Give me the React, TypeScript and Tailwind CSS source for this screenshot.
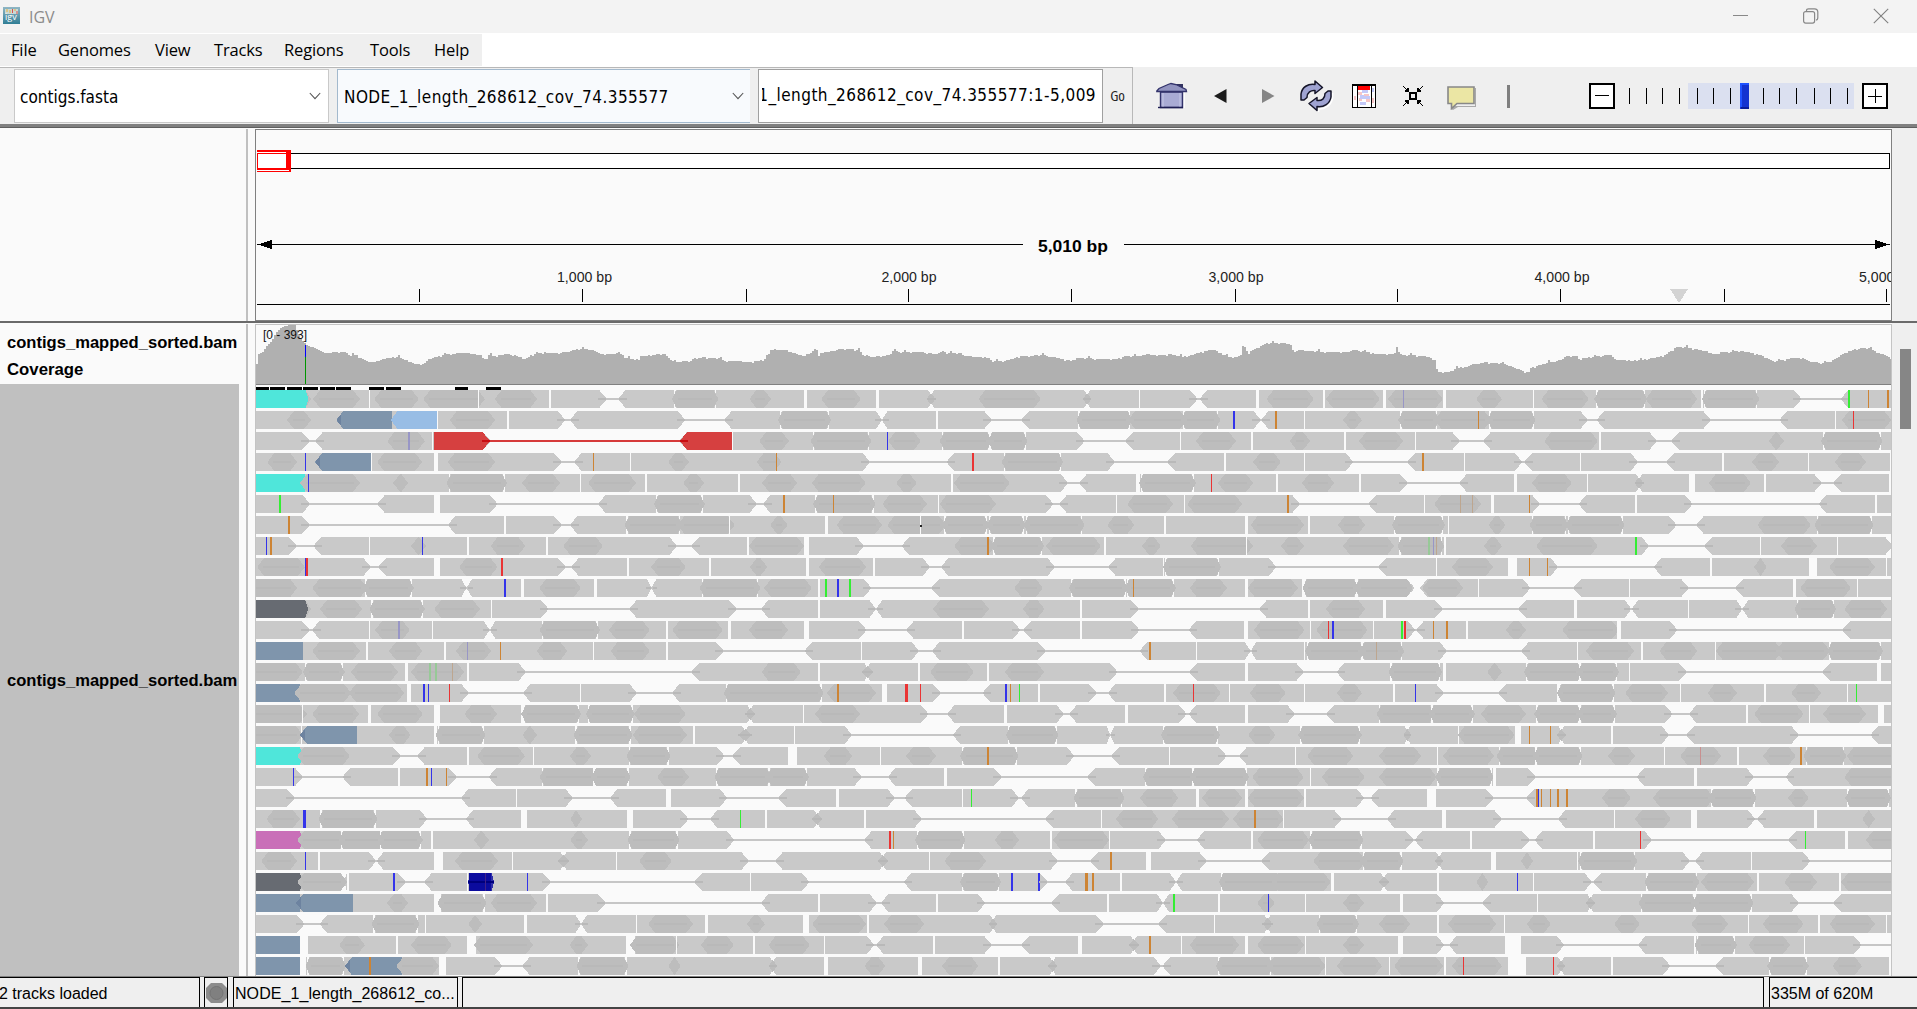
import React from "react";

const UI = "font-['Open_Sans','Noto_Sans',sans-serif]";
const FIELD = "font-['DejaVu_Sans_Condensed','DejaVu_Sans',sans-serif] [font-stretch:semi-condensed]";
const ARIAL = "font-['Liberation_Sans',Arial,sans-serif]";

/* ---------- Alignment data ----------
   Each row is split in three tiles. Tokens:
   g gap, n paired reads joined by a line, w open space between reads, x crossing reads,
   o overlap, b overlap flush with the read ends, M mismatch tick, R coloured read,
   L/A coloured reads pointing left/right. */
const ROWS: [string, string, string][] = [
  ["o735,762 Acyan,627,756 o767,882 g903 o917,1026 o1037,1188 g1171 o1212,1316 g1345,1349 n1468,1533",
   "b78,192 o268,321 g402,408 o444,541 g578,585 x702,724 o829,982 x1085,1106 g1223 n1347,1390 g1510,1516 o1535,1651",
   "g113,117 o120,252 g260,266 o272,406 Mlav,309,311 g407,413 o488,551 g626 o648,764 b777,907 o903,1030 g1039,1043 b1041,1182 n1266,1400 Mgreen,1399,1404 Morange,1448,1450 Morange,1494,1499"],
  ["o703,762 Lslate,824,960 Lsky,957,1071 g1071 o1102,1213 g1242,1246 n1366,1415",
   "n92,225 b338,468 n578,607 g726,729 n843,953 b1069,1206 o1196,1340 b1325,1422 Mblue,1453,1458 n1503,1540 Morange,1556,1561",
   "g67 o162,208 b297,398 o386,525 b515,634 Morange,492,495 n743,802 n1044,1250 g1368 o1384,1505 Mred,1411,1414"],
  ["n740,791 o949,1041 Mlav,1000,1004 g1059,1062 n1183,1683 Ared,1063,1200 Zred,1180,1686 Lred,1666,1793",
   "g225,229 o292,365 b418,567 Mblue,605,608 o608,688 b734,862 b852,950 n1070,1208 g1322,1325 o1362,1460 g1498,1501",
   "o31,81 g164,168 o201,309 g339 n429,524 o655,786 g790,793 n912,985 o1205,1242 b1333,1484"],
  ["o655,728 Mblue,747,750 Lslate,772,909 g909 o924,1034 g1063,1072 o1097,1213 n1357,1425 Morange,1453,1455 g1543,1547",
   "o69,120 o286,347 Morange,333,336 n545,770 Mred,813,818 b886,1037 n1145,1311 g1432,1435 o1502,1570",
   "g67 n168,338 Morange,355,360 g457 n582,625 g743 n866,973 g1090,1094 o1164,1230 g1302 o1367,1443 g1503"],
  ["Rcyan,627,748 o735,882 Mblue,755,757 o963,1000 b1094,1242 o1279,1372 g1420 o1441,1558",
   "g12,16 o106,157 g240,246 o299,385 o421,553 o628,678 g763,766 o769,906 n1030,1095 g1216,1224 b1222,1362 Mred,1399,1401 o1416,1502 g1557,1562",
   "o61,140 g202,205 n301,465 g581,589 o625,722 g760,763 x876,898 g1009,1023 o1058,1161 g1194,1197 n1316,1382 g1499,1504"],
  ["Mgreen,684,688 n741,943 g1063,1077 n1200,1484",
   "b34,159 n268,320 Morange,350,355 b424,577 Morange,473,475 o594,703 g731 o734,872 n994,1046 g1165 o1194,1306 g1333 o1341,1475",
   "Morange,24,29 n37,243 g361 o385,500 Mtan,449,451 Mtan,478,480 g524,531 Morange,617,620 n625,758 g876,881 n999,1346 g1466,1469"],
  ["Morange,706,710 n740,1116 g1236,1239 n1357,1415 b1530,1672",
   "o92,232 g219 o319,362 g453,460 o482,593 o606,750 g686 b740,855 b850,945 b940,1089 o1145,1211 g1285,1288 g1482,1489 o1496,1627",
   "g76,82 o149,216 b281,412 g420 o518,560 b619,714 b708,852 n960,1046 o1177,1308 b1317,1462"],
  ["Mblue,652,654 Morange,661,666 n708,787 g903 o1007,1044 Mblue,1034,1036 g1145,1150 o1202,1287 g1338,1342 o1380,1477",
   "n72,145 g263,266 o267,402 g402,413 n530,660 o770,870 Morange,850,855 b860,990 o995,1129 g1138,1141 o1230,1276 o1349,1502 g1485",
   "o10,66 o162,287 b295,410 Mpale,370,375 Mlav,382,385 Mtan,390,392 g408,413 o507,551 o635,786 Mgreen,877,882 n893,1066 g1184 o1235,1323 g1371,1373 w1490,1530"],
  ["o630,747 Mblue,747,750 Mred,750,755 n890,946 g1063,1079 o1125,1219 Mred,1227,1232 n1367,1418 g1537,1540",
   "o27,112 g168,173 o269,312 g407,415 o438,554 g571,575 n692,756 n998,1166 g1281 b1281,1424 n1540,1828",
   "g390 o429,529 g567,589 Morange,617,620 Morange,661,664 n670,942 g1062,1066 o1169,1200 g1303,1324 o1353,1465 g1493"],
  ["o610,728 o765,900 b890,1014 n1130,1156 Mblue,1235,1240 g1276,1283 o1321,1423 g1455,1462",
   "n17,40 b146,295 o304,421 g436,442 Mgreen,453,458 Mblue,483,488 Mgreen,512,517 n548,733 o917,987 b1051,1195 b1188,1313 Morange,1208,1210 o1347,1438 g1483,1490 o1489,1612",
   "g61,65 b62,200 b190,332 w318,369 o356,456 g493 n602,745 g863,866 n990,1142 g1264,1271 o1282,1406 g1420"],
  ["o735,762 Acoal,627,755 o784,887 b905,1041 o1064,1176 g1203 n1325,1560",
   "n218,315 g436,442 n562,594 o718,855 o938,991 g1077,1082 n1203,1536",
   "g76,82 o120,216 g260,266 n387,610 g728,734 n852,885 g1008 n1125,1155 b1268,1370 o1390,1495"],
  ["n740,783 g903 o919,1004 Mlav,975,981 g1059,1062 n1185,1214 b1322,1470 o1492,1592",
   "g64,68 o79,203 g216,222 o267,363 g402,415 n536,671 g789,795 n913,958 g1078,1084 n1205,1363 g1480,1489 o1504,1628",
   "g82 o96,222 Mred,125,127 Mblue,135,140 g236 Mgreen,304,309 Mred,311,316 n320,360 Morange,382,385 Morange,414,419 g463,469 o561,610 o699,838 g834,844 n962,1404"],
  ["Rslate,627,742 o765,882 g897,901 o953,1035 g1088,1092 o1117,1203 Mlav,1144,1147 Morange,1225,1227 o1315,1390 g1453 o1496,1592",
   "g64,68 n186,422 g541,545 n665,734 n975,1243 Morange,1247,1252 g1363 n1482,1510",
   "g67 b68,214 b203,312 Mtan,243,245 n398,617 g736 o757,875 g892,896 o937,1030 g1074 o1075,1238 o1222,1355 b1348,1485"],
  ["o610,742 b742,845 o860,975 g992,999 o1007,1137 Mpale,1051,1056 Mpale,1066,1071 Mtan,1107,1109 g1145,1150 n1270,1713",
   "o298,394 g436,442 x543,571 g682,685 o711,818 g851,854 o894,990 n1151,1365 g1482,1489",
   "n47,165 b273,405 g407,413 o515,551 b605,748 b736,838 g863,866 n985,1355 g1470,1479"],
  ["Rslate,627,735 o721,860 o855,990 g997,1006 Mblue,1036,1041 Mblue,1049,1051 Mred,1100,1102 n1130,1300 g1420 n1542,1665",
   "b205,450 o458,578 Morange,483,488 g593,604 Mred,649,657 Mred,686,688 n718,858 Mblue,894,899 Morange,906,909 Mgreen,929,931 g976,979 n1100,1165 g1285,1289 o1306,1423 Mred,1355,1357 g1444 o1494,1582",
   "g67 o147,208 g283,288 Mblue,338,341 n390,561 g685,690 b686,830 o853,958 g988,991 o1055,1127 g1194,1197 o1260,1333 g1397 Mgreen,1419,1421"],
  ["o610,752 g740 o765,880 g902,908 o924,1036 g1063,1079 o1138,1218 g1276,1284 b1277,1424 b1435,1555",
   "o-15,112 x258,282 g400 o429,539 n688,771 g893,898 n1020,1070 g1188,1195 n1320,1363 g1482,1489",
   "n25,140 b244,386 b373,485 o500,610 b630,747 b736,833 n950,1028 g1149,1153 o1169,1290 g1304,1307 o1338,1443 g1472,1486"],
  ["o610,742 g738 Lslate,735,875 o953,1006 g1063,1070 b1067,1190 o1280,1316 b1405,1550 o1550,1683",
   "g130,134 x241,274 g378 n501,785 b896,1026 n1143,1162 b1276,1421 o1490,1557",
   "b52,208 x310,329 g443,447 o443,582 g582,597 Morange,617,620 Morange,669,671 x685,708 g819,822 n942,1022 n1260,1473"],
  ["Acyan,627,742 o728,857 n963,1041 g1145,1150 o1169,1286 g1306 o1396,1448 b1535,1643",
   "n188,245 g363,384 o450,520 g587,590 o652,725 b784,928 Morange,850,855 n1045,1174 g1297 n1418,1487",
   "g45 o74,187 o250,353 g391 o407,532 b538,642 b628,749 o811,877 g949 o988,1088 Mrose,1036,1039 g1128,1133 o1191,1271 Morange,1281,1286 b1290,1395 o1396,1540"],
  ["Mblue,718,720 n723,858 g976,981 Morange,1044,1049 Mblue,1056,1058 Morange,1093,1095 n1100,1216 b1322,1464 b1448,1545",
   "o42,120 b182,322 b310,414 n525,626 g745,751 n867,1115 b1232,1362 b1348,1492 o1500,1626",
   "g82 o110,215 o250,391 b388,531 g530,536 n615,900 g1022,1030 n1150,1265 o1390,1540"],
  ["n703,1148 g1263 n1385,1513",
   "g64,75 n195,358 g480,487 n606,667 g790 Mgreen,811,813 n910,952 b1062,1187 o1225,1319 g1362,1369 o1377,1475 g1482,1489 o1489,1627",
   "g67,72 n195,248 g367,389 n512,630 Morange,635,639 Mblue,639,642 Morange,647,649 Morange,669,671 Morange,686,691 Morange,708,713 o796,867 o921,1070 b1058,1175 o1252,1303 b1392,1505"],
  ["o653,735 Mblue,742,750 b780,925 n1028,1160 g1276,1291 o1397,1426 g1537,1550",
   "n100,190 Mgreen,245,247 g306,311 x422,446 g550,553 n672,1012 g1130,1133 o1166,1270 o1303,1443 o1453,1577 Morange,1504,1509",
   "g15 n140,288 g404,413 n532,707 g825 o877,965 g1014,1030 n1153,1195 g1316,1324 o1434,1465"],
  ["Apink,627,742 o728,850 b830,948 b926,1036 g1056,1062 o1161,1198 o1397,1441 b1537,1665",
   "n212,568 Mred,611,615 Morange,620,622 b673,798 o869,929 g1005,1009 o1012,1150 g1150 n1270,1383 g1498,1503 o1512,1640",
   "b77,212 n316,356 g474,477 n600,650 g773,778 Mred,889,892 n900,1272 Mgreen,1293,1296 g1392,1398 o1443,1540"],
  ["o640,728 Mblue,747,750 g779,784 n904,940 g1063,1085 o1115,1220 g1255 x1367,1394 g1508,1512",
   "o-2,78 n248,350 x583,607 g709 o746,848 n1005,1122 Morange,1151,1156 g1240,1251 n1370,1541",
   "o89,218 b205,310 x387,407 g525,536 o598,627 g735 b737,883 n993,1043 g1162 n1288,1560"],
  ["Acoal,627,742 w836,850 o728,851 g849,856 Mblue,963,968 n975,1058 g1144 Xnavy,1147,1210 Mblue,1291,1294 n1330,1720",
   "g270,273 n396,665 b784,885 Mblue,909,914 Mblue,975,980 n980,1060 Morange,1090,1098 Morange,1107,1112 g1175,1180 n1298,1328 b1418,1572",
   "o-14,132 g132,139 x250,274 g391,398 o488,518 Mblue,588,590 g626 n753,794 b900,1035 o1039,1169 g1177,1182 o1243,1323 g1378,1382 o1382,1540"],
  ["Rslate,627,735 Lslate,725,865 o948,1000 g1063,1080 b1072,1192 o1202,1316 g1338,1342 n1465,1883",
   "g436,442 n562,609 g726,729 n827,1027 g1145,1148 n1267,1296 Mgreen,1306,1311 g1415,1420 o1512,1555 Mblue,1539,1541",
   "g69,72 o162,213 g302,308 n391,522 g636 x756,779 b886,1028 b1018,1168 n1260,1382"],
  ["n727,802 b910,1028 g1042 o1147,1181 g1285,1290 n1410,1438 g1557",
   "o20,130 g159,166 o262,306 g400,415 o422,554 g557,560 o598,696 x855,875 n1117,1289 g1407 x1525,1550",
   "b97,201 o250,326 g391,398 o419,537 g555,558 o612,671 o826,889 o1015,1105 g1155 o1190,1290 g1326,1330 o1354,1465 g1493"],
  ["Rslate,627,735 g735,755 o831,894 g970,974 o1007,1107 g1145,1165 o1161,1306 o1395,1441 g1534,1555 o1543,1665",
   "g89 o149,230 g278,282 o315,416 g452 n555,597 g719,722 n843,953 g1072,1084 x1197,1223 Morange,1247,1252 g1326 o1347,1468 g1482,1489 o1512,1627",
   "g69,72 o162,213 g297,308 n391,440 g559,597 n685,903 g1022,1027 b1023,1127 o1155,1257 g1290,1293 n1413,1560"],
  ["Rslate,627,735 g735,750 b748,848 Lslate,845,984 Morange,904,909 o971,1076 g1075,1092 n1212,1298 b1412,1540",
   "o69,100 x315,336 g451,460 o550,601 g682,692 o740,829 g878,883 x1000,1022 n1258,1299 b1411,1552 o1536,1680",
   "g118 o147,257 g275,278 o287,407 g408,413 o429,551 Mred,456,458 g567,611 Mred,676,679 x686,706 g819,822 n945,1093 b1201,1303 o1361,1433 g1499,1504"],
];

const OFFSETS = [0, 640, 1277];
const K = 2.45;

const COLORS: Record<string, string> = {
  cyan: "#4fe6da", slate: "#7f95ac", sky: "#98bde5", red: "#d64040", coal: "#676b72", pink: "#c96fb8", navy: "#0a0a9e",
};
const TICKS: Record<string, string> = {
  blue: "#3434ea", red: "#ea3434", green: "#34ee34", orange: "#cd8434", lav: "#9896c6", pale: "#97c997", tan: "#bda68f", rose: "#c88f8f",
};
const BG = "#fafafa";
const BODY = "#c9c9c9";
const DARK = "#bdbdbd";

function hex(a: number, b: number, y: number, t: number) {
  const s = Math.min(t, (b - a) / 2);
  return `${a},${y + 9} ${a + s},${y} ${b - s},${y} ${b},${y + 9} ${b - s},${y + 18} ${a + s},${y + 18}`;
}

function Token({ raw, off, y }: { raw: string; off: number; y: number }) {
  const kind = raw[0];
  let rest = raw.slice(1);
  let color = "";
  if ("MRLAXZ".includes(kind)) {
    const i = rest.indexOf(",");
    color = rest.slice(0, i);
    rest = rest.slice(i + 1);
  }
  const p = rest.split(",").map(Number);
  const X = (v: number) => off + v / K;
  const a = X(p[0]);
  const b = p.length > 1 ? X(p[1]) : a + 1;
  const crisp = { shapeRendering: "crispEdges" as const };
  switch (kind) {
    case "g":
      return <rect x={Math.round(a)} y={y} width={Math.max(1, Math.round(b) - Math.round(a))} height={18} fill={BG} {...crisp} />;
    case "n":
    case "w": {
      const m = (a + b) / 2;
      const l = Math.min(a + 8, m);
      const r = Math.max(b - 8, m);
      return (
        <g {...crisp}>
          <polygon fill={BG} points={`${a},${y} ${b},${y} ${r},${y + 9} ${b},${y + 18} ${a},${y + 18} ${l},${y + 9}`} />
          {kind === "n" && (
            <>
              <rect x={a - 1} y={y + 8} width={b - a + 2} height={2} fill="#c6c6c6" />
              <rect x={a - 1} y={y + 8} width={l - a} height={2} fill="#b9b9b9" />
              <rect x={r + 1} y={y + 8} width={b - r} height={2} fill="#b9b9b9" />
            </>
          )}
        </g>
      );
    }
    case "x": {
      const m = (a + b) / 2;
      return (
        <g {...crisp}>
          <polygon fill={BG} points={`${m - 3},${y} ${m + 3},${y} ${m},${y + 5}`} />
          <polygon fill={BG} points={`${m - 3},${y + 18} ${m + 3},${y + 18} ${m},${y + 13}`} />
          <polygon fill={DARK} points={`${a},${y + 9} ${m},${y + 3} ${b},${y + 9} ${m},${y + 15}`} />
          <rect x={a} y={y + 8} width={b - a} height={2} fill="#b7b7b7" />
        </g>
      );
    }
    case "o":
    case "b": {
      return (
        <g {...crisp}>
          {kind === "b" && (
            <>
              <polygon fill={BG} points={`${a + 2},${y} ${a + 4},${y} ${a + 2},${y + 6}`} />
              <polygon fill={BG} points={`${a + 2},${y + 18} ${a + 4},${y + 18} ${a + 2},${y + 12}`} />
              <polygon fill={BG} points={`${b - 4},${y} ${b - 2},${y} ${b - 2},${y + 6}`} />
              <polygon fill={BG} points={`${b - 4},${y + 18} ${b - 2},${y + 18} ${b - 2},${y + 12}`} />
            </>
          )}
          <polygon fill={DARK} points={hex(a, b, y, kind === "b" ? 5 : 7)} />
          {b - a > 16 && <rect x={a + 6} y={y + 8} width={b - a - 12} height={2} fill="#b9b9b9" />}
        </g>
      );
    }
    case "M":
      return <rect x={Math.round(a)} y={y} width={Math.max(1, Math.round((p[1] - p[0]) / K))} height={18} fill={TICKS[color]} {...crisp} />;
    case "R":
      return <rect x={a} y={y} width={b - a} height={18} fill={COLORS[color]} {...crisp} />;
    case "L":
      return (
        <g {...crisp}>
          <polygon fill={COLORS[color]} points={`${a},${y + 9} ${a + 7},${y} ${b},${y} ${b},${y + 18} ${a + 7},${y + 18}`} />
          {color === "slate" && <polygon fill="#6d83a0" points={`${a},${y + 9} ${a + 5},${y + 3} ${a + 5},${y + 15}`} />}
          {color === "red" && <rect x={a} y={y + 8} width={8} height={2} fill="#c90d12" />}
        </g>
      );
    case "A":
      return (
        <polygon fill={COLORS[color]} points={`${a},${y} ${b - (color === "red" ? 7 : 3)},${y} ${b},${y + 9} ${b - (color === "red" ? 7 : 3)},${y + 18} ${a},${y + 18}`} {...crisp} />
      );
    case "Z":
      return (
        <g {...crisp}>
          <rect x={a} y={y + 8} width={b - a} height={2} fill="#d63a3a" />
          <rect x={a} y={y + 8} width={8} height={2} fill="#c90d12" />
        </g>
      );
    case "X":
      return (
        <g {...crisp}>
          <polygon fill="#3030a8" points={hex(a, b, y, 2)} />
          <rect x={a + 1} y={y} width={b - a - 4} height={18} fill="#0b0b9e" />
          <rect x={a} y={y + 8} width={b - a} height={2} fill="#00007c" />
          <rect x={a + 17} y={y} width={1} height={18} fill="#40208a" />
        </g>
      );
  }
  return null;
}

const COVERAGE: string[] = [
  "627,132 632,102 642,95 651,80 661,68 668,52 676,36 685,24 694,20 704,15 724,15 725,30 735,55 748,75 770,85 785,92 795,100 815,97 845,97 858,107 870,105 885,115 903,127 925,122 945,113 975,112 990,118 1000,125 1015,133 1035,133 1050,115 1060,113 1085,105 1100,102 1137,98 1140,93 1148,102 1175,104 1180,115 1189,116 1195,105 1210,108 1240,102 1262,106 1285,118 1300,105 1330,97 1360,100 1390,95 1410,88 1440,87 1455,93 1470,102 1490,103 1515,97 1530,113 1545,117 1566,119",
  "0,108 20,106 45,102 62,103 65,110 83,127 108,122 120,127 128,115 155,112 195,115 205,122 240,122 265,127 290,122 305,118 313,102 320,88 357,90 370,97 385,102 400,110 407,101 424,97 427,85 431,87 433,107 440,100 465,94 485,87 510,87 538,90 540,103 550,105 565,111 600,107 610,103 622,88 635,97 680,95 720,102 740,94 750,100 785,100 790,107 820,110 850,113 862,122 895,122 910,117 930,108 955,107 985,105 1010,111 1035,118 1055,122 1068,113 1100,115 1130,118 1160,118 1175,113 1190,107 1210,109 1240,103 1265,105 1300,103 1330,110 1350,105 1365,99 1380,95 1402,88 1415,97 1430,105 1445,112 1464,112 1466,105 1474,103 1475,76 1481,82 1487,100 1495,94 1505,88 1520,78 1530,70 1550,68",
  "15,68 25,72 36,76 37,95 60,88 70,93 115,95 150,97 175,97 176,88 215,95 245,103 270,103 289,100 290,78 295,78 297,103 320,105 360,108 375,113 388,122 390,155 422,155 430,150 448,140 465,140 480,132 508,127 550,130 570,138 590,148 605,155 616,155 618,145 635,137 660,128 690,121 710,108 735,108 736,118 760,112 790,108 815,103 825,118 870,122 895,119 930,112 950,105 963,92 980,80 1000,82 1025,88 1055,95 1072,104 1090,95 1140,94 1160,98 1180,104 1200,115 1215,124 1240,120 1255,115 1285,113 1300,122 1330,130 1345,127 1370,115 1378,106 1400,93 1420,86 1450,84 1465,95 1485,104 1495,110 1505,120",
];

function coveragePath() {
  const pts: [number, number][] = [];
  COVERAGE.forEach((s, i) =>
    s.split(" ").forEach((q) => {
      const [x, y] = q.split(",").map(Number);
      pts.push([OFFSETS[i] + x / K, 320 + y / 3]);
    })
  );
  let d = "M256,384";
  let j = 0;
  for (let x = 256; x < 1891; x += 2) {
    while (j < pts.length - 2 && pts[j + 1][0] <= x) j++;
    const [x0, y0] = pts[j];
    const [x1, y1] = pts[j + 1];
    const t = Math.max(0, Math.min(1, (x - x0) / (x1 - x0)));
    const h = (x * 7919) % 23;
    const jitter = x > 330 ? (h === 3 ? -2 : h > 18 ? 1 : 0) : 0;
    const y = Math.round(y0 + (y1 - y0) * t) + jitter;
    d += `V${y}H${Math.min(1891, x + 2)}`;
  }
  return d + "V384Z";
}

const BLACK = [[627, 658], [661, 698], [703, 740], [742, 778], [784, 821], [823, 860], [904, 941], [946, 982], [1115, 1147], [1191, 1227]];

function AlignmentTrack() {
  return (
    <svg className="block" width="1635" height="651" viewBox="256 325 1635 651">
      <path d={coveragePath()} fill="#b0b0b0" shapeRendering="crispEdges" />
      <g shapeRendering="crispEdges">
        <rect x="305" y="345" width="1" height="12" fill="#0000ff" />
        <rect x="305" y="357" width="1" height="27" fill="#009600" />
        <rect x="256" y="384" width="1635" height="1" fill="#808080" />
        {BLACK.map(([a, b]) => (
          <rect key={a} x={Math.round(a / K)} y="387" width={Math.round((b - a) / K)} height="3" fill="#000" />
        ))}
      </g>
      <text x="263" y="339" textLength="44" lengthAdjust="spacingAndGlyphs" className={`${ARIAL} text-[12.5px]`} fill="#111">[0 - 393]</text>
      {ROWS.map((tiles, r) => {
        const y = 390 + r * 21;
        return (
          <g key={r}>
            <rect x="256" y={y} width="1635" height="18" fill={BODY} />
            {tiles.map((t, i) => t.split(" ").map((raw, k) => <Token key={`${i}-${k}`} raw={raw} off={OFFSETS[i]} y={y} />))}
          </g>
        );
      })}
      <rect x="920" y="525" width="2" height="2" fill="#222" />
    </svg>
  );
}

const MAJOR: [number, string][] = [[584, "1,000 bp"], [908.5, "2,000 bp"], [1235.5, "3,000 bp"], [1561.5, "4,000 bp"], [1886, "5,000 bp"]];
const TICK_X = [419, 582, 746, 908, 1071, 1235, 1397, 1560, 1724, 1886];

function Ruler() {
  return (
    <svg className="block" width="1635" height="190" viewBox="256 130 1635 190">
      <g shapeRendering="crispEdges">
        <rect x="257" y="153" width="1633" height="16" fill="#000" />
        <rect x="258" y="154" width="1631" height="14" fill="#fff" />
        <rect x="257" y="150" width="34" height="22" fill="#fff" />
        <path d="M257 150h34v22h-34v-1h32v-1h-32v-2h29v-14h-29v-1h30v-1h-30z M257 154h1v14h-1z" fill="#f00" />
        <rect x="286" y="152" width="4" height="18" fill="#f00" />
        <rect x="257" y="244" width="766" height="1" />
        <rect x="1124" y="244" width="766" height="1" />
        <path d="M258 244.5L272 240V249Z M1889 244.5L1875 240V249Z" />
        {TICK_X.map((x) => <rect key={x} x={x} y="289" width="1" height="13" />)}
        <rect x="257" y="304" width="1633" height="1" />
        <path d="M1670 289H1688L1679 303Z" fill="#d3d3d3" />
      </g>
      <text x="1038" y="251.5" textLength="70" lengthAdjust="spacingAndGlyphs" className={`${ARIAL} text-[17px] font-bold`}>5,010 bp</text>
      {MAJOR.map(([x, s]) => (
        <text key={s} x={x - 27} y="282" textLength="55" lengthAdjust="spacingAndGlyphs" className={`${ARIAL} text-[15px]`} fill="#222">{s}</text>
      ))}
    </svg>
  );
}

function Chevron() {
  return (
    <svg width="12" height="8" viewBox="0 0 12 8" fill="none" stroke="#555" strokeWidth="1.1"><path d="M0.8 1L6 6.6L11.2 1" /></svg>
  );
}

function AppIcon() {
  return (
    <div className="relative ml-[3px] h-[17px] w-[17px] overflow-hidden bg-gradient-to-b from-[#8fb6c4] to-[#2f7f96]">
      <svg className="absolute inset-0" width="17" height="17" viewBox="0 0 17 17">
        <path d="M2 2h13v5H2z" fill="#c9d9d6" />
        <path d="M4 2v3M7 3v3M12 2v2" stroke="#e8b23a" />
        <path d="M9.500 2v4M14 4v3" stroke="#d9534f" />
      </svg>
      <span className={`${UI} absolute left-[2px] top-[4px] text-[9px] leading-[12px] text-white`}>igv</span>
    </div>
  );
}

function HouseIcon() {
  return (
    <svg className="ml-[23px]" width="32" height="28" viewBox="0 0 32 28">
      <path d="M5 10H29V26H5Z" fill="#fff" opacity=".8" />
      <path d="M4.500 10V25.500H26.500V10Z" fill="#a9abd4" stroke="#33336b" strokeWidth="1.4" />
      <path d="M7 11V25M24 11V25" stroke="#c6c8e6" />
      <path d="M20 2h7v6h-7z" fill="#33335f" />
      <path d="M0.800 9L3 6.500L12 2.500L15 1.500L20 2.500L30 7.500L30.500 9.500H0.800Z" fill="#9294c0" stroke="#33336b" strokeWidth="1.3" />
      <path d="M2 25.500H27" stroke="#1f1f55" strokeWidth="1.4" />
    </svg>
  );
}

function RefreshIcon() {
  return (
    <svg width="34" height="32" viewBox="0 0 34 32" strokeLinejoin="round">
      <path d="M32.500 13V18C31 26 24 29.500 18.500 29V32" fill="none" stroke="#fff" strokeWidth="1.6" />
      <path d="M1 20V14C2 7 8 3.500 15 4.500V1L22.500 7.500L15 13.500V10.500C11 10 7 12.500 7 17.500L4 20Z" fill="#9fa3d2" stroke="#141428" strokeWidth="1.5" />
      <path d="M31 11V17C30 23.500 24 27.500 17 26.500V30.500L9 23.500L17 17.500V20.500C22 21 25 18.500 25 13.500L28 11Z" fill="#9fa3d2" stroke="#141428" strokeWidth="1.5" />
    </svg>
  );
}

function RegionIcon() {
  return (
    <svg width="24" height="24" viewBox="0 0 24 24" shapeRendering="crispEdges">
      <rect x="0" y="0" width="24" height="24" fill="#000" />
      <rect x="1" y="2" width="22" height="21" fill="#fff" />
      <path d="M6 8h4v3H6zM12 10h5v2h-5zM7 14h3v3H7zM14 15h4v3h-4zM2 12h2v4H2zM20 14h2v5h-2z" fill="#f6c4c6" />
      <path d="M10 6h6v3h-6zM8 11h4v4H8zM12 12h6v3h-6zM8 18h6v3H8zM20 4h2v4h-2z" fill="#c3c8f8" />
      <rect x="6" y="2" width="12" height="4" fill="#f00" />
      <rect x="5" y="0" width="1" height="24" />
      <rect x="19" y="0" width="1" height="24" />
    </svg>
  );
}

function FitIcon() {
  return (
    <svg width="20" height="20" viewBox="0 0 20 20" shapeRendering="crispEdges" fill="none" stroke="#000">
      <rect x="7" y="7" width="6" height="6" strokeWidth="2" fill="#f0f0f0" />
      <path d="M0 0L6 6M20 0L14 6M0 20L6 14M20 20L14 14M2 5H5V2M18 5H15V2M2 15H5V18M18 15H15V18" strokeWidth="1.1" />
    </svg>
  );
}

function BubbleIcon() {
  return (
    <svg width="29" height="24" viewBox="0 0 29 24">
      <path d="M2 20h26V2h1v19H11L6 24l-2-1V20z" fill="#a9a9a9" />
      <path d="M1 1H27V17.500H10L4.500 22.500V17.500H1Z" fill="#ebe6a4" stroke="#888" strokeWidth="1.6" />
    </svg>
  );
}

const ZOOM_TICKS = [1629, 1646, 1662, 1679, 1697, 1713, 1730, 1763, 1779, 1796, 1814, 1830, 1847];

function ZoomScale() {
  return (
    <svg width="239" height="26" viewBox="1619 82 239 26" shapeRendering="crispEdges">
      <rect x="1688" y="82" width="166" height="26" fill="#dbe0f0" />
      {ZOOM_TICKS.map((x) => <rect key={x} x={x} y="87" width="1" height="16" fill="#000" />)}
      <rect x="1740" y="82" width="9" height="26" fill="#1433d0" />
      <path d="M1740 82h9v2h-7v22h-2z" fill="#1f52ff" />
      <rect x="1741" y="106" width="8" height="2" fill="#0a1c98" />
    </svg>
  );
}

const MENUS: [string, string][] = [
  ["File", "w-[25px]"], ["Genomes", "w-[75px]"], ["View", "w-[37px]"], ["Tracks", "w-[48px]"], ["Regions", "w-[64px]"], ["Tools", "w-[42px]"], ["Help", "w-[36px]"],
];

export default function App() {
  return (
    <div className="flex h-[1009px] w-[1917px] flex-col overflow-hidden bg-[#fafafa] text-black">
      {/* Title bar */}
      <header className="flex h-[33px] shrink-0 items-center bg-[#f3f3f3] pb-[2px]">
        <AppIcon />
        <span className={`${UI} ml-[9px] pt-[2px] text-[16px] text-[#8b8b8b]`}>IGV</span>
        <div className="ml-auto mr-[28px] flex items-center gap-[54px]">
          <svg width="16" height="16" stroke="#888" fill="none"><path d="M0 7.500H15" /></svg>
          <svg width="16" height="16" stroke="#888" fill="none" strokeWidth="1.2"><rect x="0.600" y="3.600" width="11" height="11.500" rx="2" /><path d="M3.500 3V2.500Q3.500 0.800 5.500 0.800H11.500Q14.800 0.800 14.800 4V9.500Q14.800 12 13 12" /></svg>
          <svg width="16" height="16" stroke="#808080" fill="none" strokeWidth="1.1"><path d="M0.800 0.800L15.200 15.200M15.200 0.800L0.800 15.200" /></svg>
        </div>
      </header>

      {/* Menu bar */}
      <nav className="flex h-[34px] shrink-0 bg-white pb-px pt-px">
        <div className={`${UI} flex w-[482px] items-center gap-[22px] whitespace-nowrap bg-[#efefef] pl-[11px] pt-px text-[16.5px] tracking-[-0.15px]`}>
          {MENUS.map(([m, w]) => <span key={m} className={w}>{m}</span>)}
        </div>
      </nav>

      {/* Toolbar */}
      <div className="flex h-[57px] shrink-0 bg-[#efefef]">
        <div className={`${FIELD} flex w-[1133px] shrink-0 border-r border-t border-[#b8b8b8] pb-px pl-[14px] pt-px text-[17px]`}>
          <div className="flex w-[315px] items-center justify-between border border-[#c9c9c9] bg-white pl-[5px] pr-[7px]">
            <span className="pt-[3px]">contigs.fasta</span><Chevron />
          </div>
          <div className="ml-[8px] flex w-[413px] items-center justify-between border border-r-0 border-[#a3b9cd] bg-[#f8fafd] pl-[6px] pr-[6px]">
            <span className="pt-[3px] tracking-[0.45px]">NODE_1_length_268612_cov_74.355577</span><Chevron />
          </div>
          <div className="ml-[8px] flex w-[345px] items-center overflow-hidden border border-[#a0a0a0] bg-white px-[3px]">
            <div className="flex w-[337px] justify-end overflow-hidden pr-[3px]"><span className="whitespace-nowrap tracking-[0.45px]">NODE_1_length_268612_cov_74.355577:1-5,009</span></div>
          </div>
          <span className={`${UI} flex flex-1 items-center justify-center pb-px text-[15px] text-[#222]`}>Go</span>
        </div>
        <div className="flex flex-1 items-center pt-px">
          <HouseIcon />
          <svg className="ml-[26px]" width="13" height="14"><path d="M0 7L12.500 0V14Z" fill="#1c1c1c" /></svg>
          <svg className="ml-[35px]" width="13" height="14"><path d="M0 0V14L12.500 7Z" fill="#868686" /></svg>
          <div className="ml-[25px]"><RefreshIcon /></div>
          <div className="ml-[18px]"><RegionIcon /></div>
          <div className="ml-[27px]"><FitIcon /></div>
          <div className="ml-[24px] mt-[3px]"><BubbleIcon /></div>
          <div className="ml-[31px] h-[23px] w-[3px] bg-[#7f7f7f]" />
          <div className="ml-auto mr-[29px] flex items-center pb-px">
            <div className="flex h-[26px] w-[26px] items-center justify-center border-2 border-black bg-white"><div className="h-px w-[14px] bg-black" /></div>
            <div className="mx-[4px]"><ZoomScale /></div>
            <div className="flex h-[26px] w-[26px] items-center justify-center border-2 border-black bg-white">
              <svg width="14" height="14" shapeRendering="crispEdges"><path d="M0 7h14v1H0zM7 0h1v14H7z" /></svg>
            </div>
          </div>
        </div>
      </div>
      <div className="h-[3px] shrink-0 bg-[#808080]" />
      <div className="h-px shrink-0 bg-[#5f5f5f]" />

      {/* Ruler panel */}
      <div className="flex h-[193px] shrink-0 pt-px">
        <div className="w-[248px] border-r-2 border-[#c0c0c0]" />
        <div className="ml-[7px] w-[1637px] border border-[#808080]"><Ruler /></div>
        <div className="-mt-px flex-1 bg-[#efefef]" />
      </div>
      <div className="h-[2px] shrink-0 bg-[#6a6a6a]" />

      {/* Data panel */}
      <div className="flex h-[653px] shrink-0 pt-px">
        <div className="flex w-[248px] flex-col border-r-2 border-[#c0c0c0]">
          <div className={`${ARIAL} h-[60px] pl-[7px] pt-[5px] text-[17px] font-bold leading-[27px]`}>
            <p><span className="inline-block origin-left scale-x-[0.975]">contigs_mapped_sorted.bam</span></p>
            <p><span className="inline-block origin-left scale-x-[0.985]">Coverage</span></p>
          </div>
          <div className={`${ARIAL} flex w-[239px] flex-1 items-center bg-[#c0c0c0] pl-[7px] pt-[2px] text-[17px] font-bold`}>
            <span className="inline-block origin-left scale-x-[0.975]">contigs_mapped_sorted.bam</span>
          </div>
        </div>
        <div className="ml-[7px] w-[1637px] border border-b-0 border-[#c4c4c4]"><AlignmentTrack /></div>
        <div className="-mt-px flex-1 bg-[#efefef] pl-[8px] pt-[26px]"><div className="h-[80px] w-[11px] bg-[#868686]" /></div>
      </div>

      {/* Status bar */}
      <footer className={`${ARIAL} flex h-[33px] shrink-0 border-b-2 border-t border-b-[#444] border-t-[#808080] bg-[#efefef] text-[16px]`}>
        <div className="flex w-[200px] items-center border-r border-t border-black pt-[2px]"><span className="-ml-px">2 tracks loaded</span></div>
        <div className="ml-[4px] flex w-[24px] items-center justify-center border border-b-0 border-black">
          <svg width="21" height="20"><path d="M5 0H16L21 5V15L16 20H5L0 15V5Z" fill="#8c8c8c" /><circle cx="10.500" cy="10" r="6.500" fill="#808080" stroke="#747474" /></svg>
        </div>
        <div className="ml-[5px] flex w-[225px] items-center whitespace-nowrap border border-b-0 border-black pl-px pt-[2px]"><span className="tracking-[0.07px]">NODE_1_length_268612_co...</span></div>
        <div className="ml-[4px] w-[1302px] border border-b-0 border-black" />
        <div className="ml-[5px] flex flex-1 items-center border-l border-t border-black pl-px pt-[2px]"><span>335M of 620M</span></div>
      </footer>
    </div>
  );
}
